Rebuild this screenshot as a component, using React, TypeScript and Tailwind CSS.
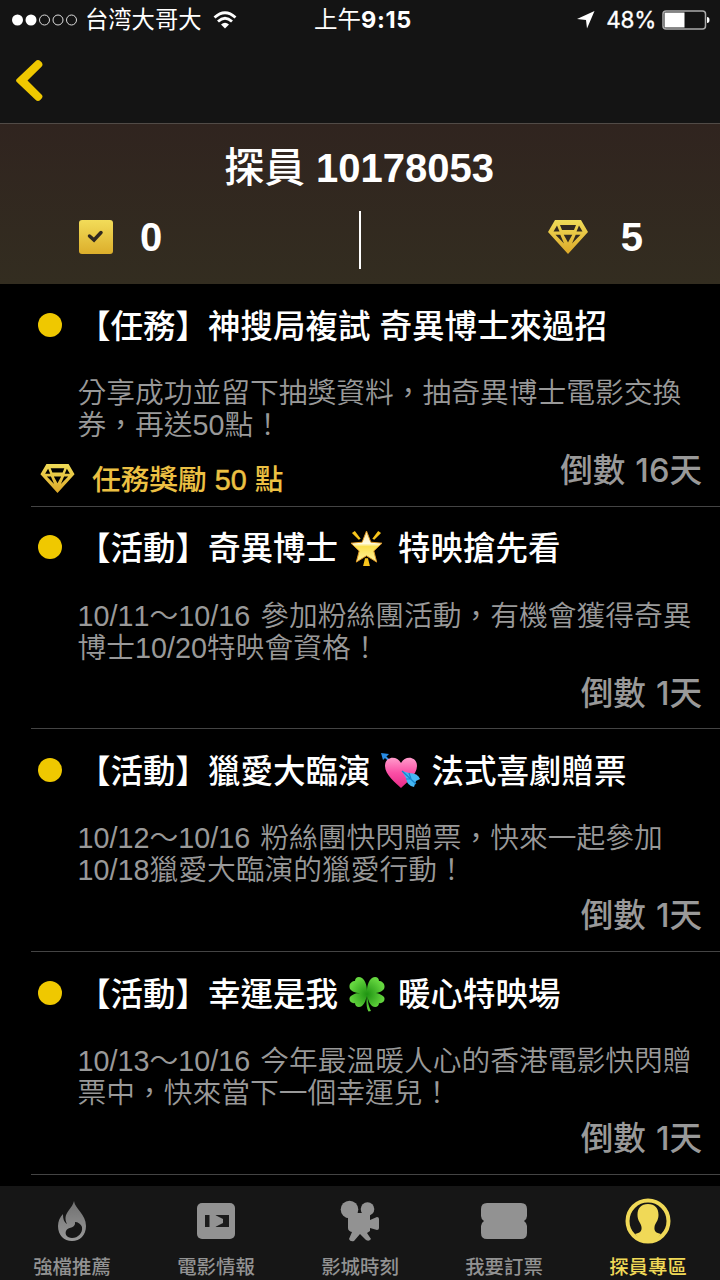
import React from 'react';

const tasks = [
  {
    title: '【任務】神搜局複試 奇異博士來過招',
    lines: ['分享成功並留下抽獎資料，抽奇異博士電影交換', '券，再送50點！'],
    days: 16,
    reward: 50,
  },
  {
    title: '【活動】奇異博士',
    icon: 'star',
    titleEnd: '特映搶先看',
    lines: ['10/11～10/16 參加粉絲團活動，有機會獲得奇異', '博士10/20特映會資格！'],
    days: 1,
  },
  {
    title: '【活動】獵愛大臨演',
    icon: 'heart',
    titleEnd: '法式喜劇贈票',
    lines: ['10/12～10/16 粉絲團快閃贈票，快來一起參加', '10/18獵愛大臨演的獵愛行動！'],
    days: 1,
  },
  {
    title: '【活動】幸運是我',
    icon: 'clover',
    titleEnd: '暖心特映場',
    lines: ['10/13～10/16 今年最溫暖人心的香港電影快閃贈', '票中，快來當下一個幸運兒！'],
    days: 1,
  },
];

const Gem = ({ className }: { className: string }) => (
  <svg viewBox="0 0 40 34" className={className}>
    <defs>
      <linearGradient id="gem" x1="0" y1="0" x2="0" y2="1">
        <stop offset="0" stopColor="#f0dc58" />
        <stop offset="1" stopColor="#dca828" />
      </linearGradient>
    </defs>
    <path
      fill="url(#gem)"
      fillRule="evenodd"
      d="M7 0H33L40 12L20 34L0 12ZM9 5.500L5.500 11.500H11.500ZM12 5L14 10H26L28 5ZM31 5.500L28.500 11.500H34.500ZM7.500 14.700L16 23.500L12.300 14.700ZM15.700 14.700L20 22.500L24.300 14.700ZM27.700 14.700L24 23.500L32.500 14.700Z"
    />
  </svg>
);

const Star = () => (
  <svg viewBox="0 0 34 38" className="ml-[12px] mr-[15px] h-[37px] w-[33px]">
    <defs>
      <linearGradient id="star" x1="0" y1="0" x2="0" y2="1">
        <stop offset="0" stopColor="#ffe9a0" />
        <stop offset=".4" stopColor="#fffbe0" />
        <stop offset=".5" stopColor="#fbe04e" />
        <stop offset="1" stopColor="#fff3a0" />
      </linearGradient>
    </defs>
    <path d="M2 3L5 1L11 9L9 10ZM32 3L29 1L23 9L25 10ZM15.500 29H18.500L20.500 37H13.500Z" fill="#f8c51c" />
    <path
      d="M17 1L21.500 12.500L33 13.500L24.500 21.500L27.500 33L17 26.500L6.500 33L9.500 21.500L1 13.500L12.500 12.500Z"
      fill="url(#star)"
      stroke="#e09a24"
      strokeWidth="1"
    />
  </svg>
);

const Heart = () => (
  <svg viewBox="0 0 40 36" className="ml-[10px] mr-[11px] h-[36px] w-[40px]">
    <defs>
      <linearGradient id="heart" x1="0" y1="0" x2="0" y2="1">
        <stop offset="0" stopColor="#ff9ccb" />
        <stop offset=".5" stopColor="#fb4fa6" />
        <stop offset="1" stopColor="#e82a86" />
      </linearGradient>
    </defs>
    <path d="M2 2L10 9" stroke="#3b8fe0" strokeWidth="2" />
    <path d="M0 0L8 1L6 3L4 5L2 7Z" fill="#278be5" />
    <path
      d="M20 35C15 30 4 22 4 13C4 3 16 2 20 10C24 2 36 3 36 13C36 22 25 30 20 35Z"
      fill="url(#heart)"
    />
    <path d="M21 18L28 20Q37 20 39 26L35 28L33 34Q26 33 25 25Z" fill="#45b6f3" />
    <path d="M21 18L35 31M28 20L30 26L25 26" stroke="#1685d0" strokeWidth="1.200" fill="none" />
  </svg>
);

const Clover = () => (
  <svg viewBox="0 0 36 36" className="ml-[11px] mr-[13px] h-[36px] w-[36px]">
    <defs>
      <radialGradient id="clover">
        <stop offset="0" stopColor="#1f9412" />
        <stop offset="1" stopColor="#65d63f" />
      </radialGradient>
    </defs>
    <path
      d="M18 17C11 18 4 17 1 13C-1 8 3 5 6 5C6 1 10 0 13 2C17 5 18 11 18 15C18 11 19 5 23 2C26 0 30 1 30 5C33 5 37 8 35 13C32 17 25 18 18 17C25 16 32 17 35 21C37 25 33 28 30 27C30 31 26 32 23 30C20 27 19 24 18.500 20C19 27 20 31 22 35L19.500 35.500C17 31 17.500 26 17.500 20C17 24 16 27 13 30C10 32 6 31 6 27C3 28 -1 25 1 21C4 17 11 16 18 17Z"
      fill="url(#clover)"
    />
  </svg>
);

const emojis = { star: Star, heart: Heart, clover: Clover };

const Flame = () => (
  <svg viewBox="0 0 28 40" className="h-10 w-7">
    <defs>
      <linearGradient id="flame" x1="0" y1="0" x2="0" y2="1">
        <stop offset="0" stopColor="#707070" />
        <stop offset="1" stopColor="#999" />
      </linearGradient>
    </defs>
    <path
      fill="url(#flame)"
      fillRule="evenodd"
      d="M16 0C17 8 28 13 28 25C28 34 22 40 14 40C6 40 0 34 0 25C0 20 2 16 5 13C5 18 6 21 9 23C4 12 14 9 16 0ZM17 21C18 27 11 26 8.500 29C6 33 9 37 14 37C20 37 25 32 24 26C23 23 20 21 17 21Z"
    />
  </svg>
);

const Film = () => (
  <svg viewBox="0 0 40 38" className="h-[38px] w-10 blur-[0.500px]">
    <rect x="1" y="1" width="38" height="36" rx="5" fill="#929292" />
    <path d="M9 13H13.500V25H9Z M19 13L27 19L19 25H33V13Z" fill="#1c1c1c" />
    <path d="M19 13L27 17V21L19 25Z" fill="#929292" />
  </svg>
);

const Camera = () => (
  <svg viewBox="0 0 40 42" className="h-[42px] w-10 blur-[0.500px]" fill="#929292">
    <circle cx="9.500" cy="9.500" r="8.800" />
    <circle cx="27.500" cy="9" r="6.800" />
    <path d="M8 13H30V20L37 17Q39 17 39 19V28Q39 30 37 30L30 28V31L27 33L31 39Q29 42 26 40L20 34L14 41Q10 42 9 39L12 32Q8 31 8 28Z" />
  </svg>
);

const Ticket = () => (
  <svg viewBox="0 0 46 36" className="h-9 w-[46px] blur-[0.500px]">
    <path
      d="M6 0H40Q46 0 46 6V13Q46 16 43 18Q46 20 46 23V30Q46 36 40 36H6Q0 36 0 30V23Q0 20 3 18Q0 16 0 13V6Q0 0 6 0Z"
      fill="#929292"
    />
  </svg>
);

const Agent = () => (
  <svg viewBox="0 0 46 46" className="h-[46px] w-[46px] blur-[0.400px]">
    <circle cx="23" cy="23" r="20.500" fill="none" stroke="#f0d957" strokeWidth="4" />
    <path
      d="M23 6C30 6 33.500 10 33.500 17C33.500 23 30 25 29.500 29C29 33 31 35 36 36Q31 43 23 43Q15 43 10 36C15 35 17 33 16.500 29C16 25 12.500 23 12.500 17C12.500 10 16 6 23 6Z"
      fill="#f0d957"
    />
  </svg>
);

const tabs = [
  { label: '強檔推薦', Icon: Flame },
  { label: '電影情報', Icon: Film },
  { label: '影城時刻', Icon: Camera },
  { label: '我要訂票', Icon: Ticket },
  { label: '探員專區', Icon: Agent, active: true },
];

const StatusBar = () => (
  <div className="grid h-10 grid-cols-3 items-center font-['Inter','Noto_Sans_CJK_SC',sans-serif] text-[23px] leading-10 text-white">
    <div className="flex items-center pl-3">
      <svg viewBox="0 0 66 12" className="h-3 w-[66px]" fill="#fff">
        <circle cx="5.500" cy="6" r="5.500" />
        <circle cx="19" cy="6" r="5.500" />
        <g fill="none" stroke="#ddd">
          <circle cx="32.500" cy="6" r="5" />
          <circle cx="46" cy="6" r="5" />
          <circle cx="59.500" cy="6" r="5" />
        </g>
      </svg>
      <span className="ml-[7px] whitespace-nowrap text-[23.300px]">台湾大哥大</span>
      <svg viewBox="0 0 24 18" className="ml-3 h-[18px] w-6" fill="none" stroke="#fff" strokeWidth="2.800">
        <path d="M1.500 6.500Q12 -3 22.500 6.500M5 10.500Q12 4 19 10.500" />
        <path d="M8 13.500Q12 10 16 13.500L12 17.500Z" fill="#fff" stroke="none" />
      </svg>
    </div>
    <div className="whitespace-nowrap pl-[6px] text-center text-[23.500px]">
      上午<b className="font-bold tracking-[0.700px]">9:15</b>
    </div>
    <div className="flex items-center justify-end pr-[10px]">
      <svg viewBox="0 0 18 18" className="mr-[11px] h-[18px] w-[18px]" fill="#fff">
        <path d="M17.500 0L10 17.500L9 9L0 8Z" />
      </svg>
      <span className="text-[22.500px] tracking-[-0.300px] [-webkit-text-stroke:0.300px]">48%</span>
      <svg viewBox="0 0 48 20" className="ml-[6px] h-5 w-12">
        <rect x="1" y="1" width="42.500" height="18" rx="3" fill="none" stroke="#aaa" strokeWidth="1.500" />
        <rect x="2.500" y="2.500" width="20" height="15" fill="#fff" />
        <path d="M45 7Q47.500 7 47.500 10Q47.500 13 45 13Z" fill="#fff" />
      </svg>
    </div>
  </div>
);

export default function App() {
  return (
    <div className="flex h-[1280px] w-[720px] flex-col overflow-hidden bg-black font-['Liberation_Sans','Noto_Sans_CJK_TC',sans-serif] [font-kerning:none]">
      <header className="h-[123px] bg-[#141414]">
        <StatusBar />
        <svg viewBox="0 0 27 43" className="ml-4 mt-[19px] h-[43px] w-[27px]">
          <path
            d="M19.500 2.200Q22 -.2 24.500 2.300Q28 5 25.500 7.700L11.500 21.500L25.500 35.500Q28 38 24.500 40.700Q22 43.200 19.500 40.800L.8 23Q-.7 21.500 .8 20Z"
            fill="#efc800"
          />
        </svg>
      </header>

      {/* Agent summary */}
      <section className="h-[161px] border-t border-[#514b47] bg-linear-to-b from-[#30241f] to-[#332d20] text-[40px] font-bold text-white">
        <h1 className="pr-[2px] pt-[14px] text-center font-medium leading-[60px]">
          <span className="text-[40.500px]">探員</span> <span className="font-bold">10178053</span>
        </h1>
        <div className="mt-[13px] flex h-[58px]">
          <div className="flex w-[359px] items-center pb-[6px] pl-[79px]">
            <svg viewBox="0 0 34 34" className="h-[34px] w-[34px]">
              <defs>
                <linearGradient id="box" x1="0" y1="0" x2="0" y2="1">
                  <stop offset="0" stopColor="#f2dc59" />
                  <stop offset="1" stopColor="#dcae2b" />
                </linearGradient>
              </defs>
              <rect width="34" height="34" rx="3" fill="url(#box)" />
              <path d="M10.500 16L15 20L22 12.500" fill="none" stroke="#302820" strokeWidth="3.500" strokeLinecap="round" />
            </svg>
            <span className="ml-[27px]">0</span>
          </div>
          <div className="w-[2px] bg-white" />
          <div className="flex flex-1 items-center justify-end pb-[7px] pr-[77px]">
            <Gem className="h-[34px] w-10" />
            <span className="ml-[33px]">5</span>
          </div>
        </div>
      </section>

      {/* Task list */}
      <main className="flex-1 pl-[31px]">
        {tasks.map(({ title, icon, titleEnd, lines, days, reward }) => {
          const Emoji = icon && emojis[icon as keyof typeof emojis];
          return (
            <article key={title} className="h-[222.700px] border-b border-[#444]">
              <div className="flex h-[81px] items-center pl-[7px] text-[32.500px] font-medium text-white">
                <span className="h-6 w-6 rounded-full bg-[#efc800]" />
                <h2 className="ml-4 flex items-center whitespace-nowrap pt-[5px]">
                  {title}
                  {Emoji && (
                    <span className="-mt-[3px]">
                      <Emoji />
                    </span>
                  )}
                  {titleEnd}
                </h2>
              </div>
              <p className="mt-3 whitespace-nowrap pl-[46.500px] text-[28.750px] font-[350] leading-8 text-[#999] [word-spacing:2px]">
                {lines[0]}
                <br />
                {lines[1]}
              </p>
              <div className="flex h-[60px] justify-between pr-[18px]">
                <div className="flex items-center pl-[9px] pt-[15px] text-[28.700px] font-medium text-[#ecc043]">
                  {reward && (
                    <>
                      <Gem className="mr-[17px] h-[29px] w-[35px]" />
                      <span className="pt-[5px]">
                        任務獎勵 <span className="[-webkit-text-stroke:0.500px]">{reward}</span> 點
                      </span>
                    </>
                  )}
                </div>
                <span className="text-[32.600px] font-medium leading-[58px] text-[#999] [word-spacing:1px]">
                  倒數 <span className="font-['Inter']">{days}</span>天
                </span>
              </div>
            </article>
          );
        })}
      </main>

      <nav className="flex h-[94px] bg-[#161616]">
        {tabs.map(({ label, Icon, active }) => (
          <div key={label} className={`flex flex-1 flex-col items-center ${active ? 'text-[#f0d957]' : 'text-[#929292]'}`}>
            <div className="flex h-[71px] items-center pb-[2px]">
              <Icon />
            </div>
            <span className="text-[19.400px] font-medium leading-5">{label}</span>
          </div>
        ))}
      </nav>
    </div>
  );
}
